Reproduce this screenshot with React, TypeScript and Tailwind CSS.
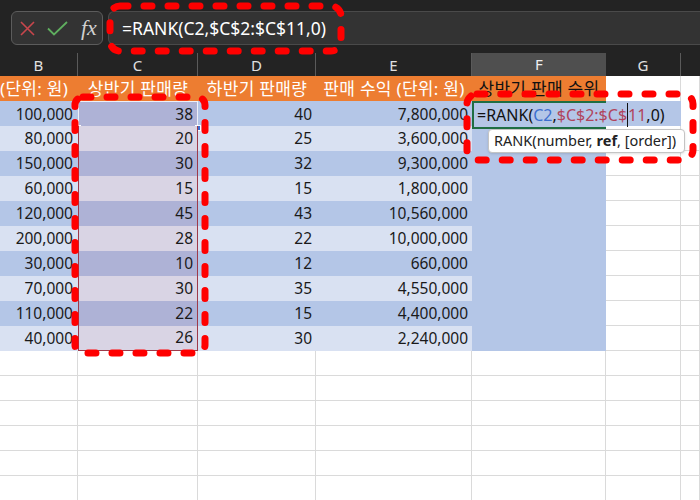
import React from 'react'

const cols = 'grid grid-cols-[78px_120px_118px_156px_134px_75px_1fr]'

const rows = [
  ['100,000', '38', '40', '7,800,000'],
  ['80,000', '20', '25', '3,600,000'],
  ['150,000', '30', '32', '9,300,000'],
  ['60,000', '15', '15', '1,800,000'],
  ['120,000', '45', '43', '10,560,000'],
  ['200,000', '28', '22', '10,000,000'],
  ['30,000', '10', '12', '660,000'],
  ['70,000', '30', '35', '4,550,000'],
  ['110,000', '22', '15', '4,400,000'],
  ['40,000', '26', '30', '2,240,000'],
]

const grid = 'border-r border-b border-[#dadada] bg-white'

function ColHead({ label, active }: { label: string; active?: boolean }) {
  return (
    <div
      className={
        active
          ? 'flex items-center justify-center bg-[#4f4f4f] border-b-2 border-[#2f7a4f] text-[15px] text-[#f0f0f0]'
          : 'flex items-center justify-center border-r border-[#5a5a5a] text-[15px] text-[#e0e0e0]'
      }
    >
      {label}
    </div>
  )
}

function DataRow({ cells, index }: { cells: string[]; index: number }) {
  const dark = index % 2 === 0
  const base = dark ? 'bg-[#b4c6e7]' : 'bg-[#d9e1f2]'
  const tint = dark ? 'bg-[#aeb2d6]' : 'bg-[#d9d4e4]'
  const first = index === 0
  const last = index === rows.length - 1

  let cBorder = 'border-x border-[#9e3a4a]'
  if (first) cBorder = 'border-x border-t border-[#eef0f8] border-b-2 border-b-[#3d6fd1]'
  if (last) cBorder = 'border-x border-b border-[#9e3a4a]'

  return (
    <div className={`${cols} h-[25px] text-[15.5px] text-[#1a1a1a]`}>
      <div className={`${base} flex items-center justify-end pr-[5px]`}>{cells[0]}</div>
      <div className={`${tint} ${cBorder} relative flex items-center justify-end pr-[4px]`}>
        {cells[1]}
        {first && (
          <>
            <span className="absolute -left-[4px] -bottom-[4px] w-[6px] h-[6px] bg-[#3d6fd1] border border-white" />
            <span className="absolute -right-[4px] -bottom-[4px] w-[6px] h-[6px] bg-[#3d6fd1] border border-white" />
          </>
        )}
      </div>
      <div className={`${base} flex items-center justify-end pr-[4px]`}>{cells[2]}</div>
      <div className={`${base} flex items-center justify-end pr-[4px]`}>{cells[3]}</div>
      {first ? (
        <div className="relative z-10 bg-[#b4c6e7] border-l-2 border-y-2 border-[#1f6e43] flex items-center pl-[3px] whitespace-nowrap text-[16px] text-[#111]">
          =RANK(<span className="text-[#3c6fcf]">C2</span>,
          <span className="text-[#b0445c]">$C$2:$C$</span>
          <span className="text-[#b0445c] border-l border-[#111]">11</span>,0)
        </div>
      ) : (
        <div className="bg-[#b4c6e7]" />
      )}
      <div className={first ? 'bg-[#b4c6e7]' : grid} />
      <div className={grid} />
    </div>
  )
}

export default function App() {
  return (
    <div className="relative w-[700px] h-[500px] overflow-hidden bg-white font-['Noto_Sans','Noto_Sans_CJK_KR',sans-serif]">
      {/* Formula bar */}
      <div className="h-[53px] bg-[#232323] pt-[11px] pl-[11px] flex gap-[5px]">
        <div className="w-[92px] h-[34px] rounded-[6px] border border-[#5c5c5c] bg-[#333333] flex items-center pl-[8px]">
          <svg width="15" height="15" viewBox="0 0 15 15" className="shrink-0">
            <path d="M1 1 L14 14 M14 1 L1 14" stroke="#c8464c" strokeWidth="1.6" fill="none" />
          </svg>
          <svg width="21" height="15" viewBox="0 0 21 15" className="ml-[12px] shrink-0">
            <path d="M1 7.5 L7 13.5 L20 1" stroke="#5fae5f" strokeWidth="1.8" fill="none" />
          </svg>
          <span className="ml-[13px] font-['Liberation_Serif',serif] italic text-[22px] leading-none text-[#d0d0d0]">fx</span>
        </div>
        <div className="flex-1 h-[34px] rounded-l-[6px] border border-r-0 border-[#4a4a4a] bg-[#333333] flex items-center pl-[13px] text-[17.5px] text-white whitespace-nowrap">
          =RANK(C2,$C$2:$C$11,0)
        </div>
      </div>

      {/* Column letters */}
      <div className={`${cols} h-[23px] bg-[#232323]`}>
        <ColHead label="B" />
        <ColHead label="C" />
        <ColHead label="D" />
        <ColHead label="E" />
        <ColHead label="F" active />
        <ColHead label="G" />
        <div />
      </div>

      {/* Header row */}
      <div className={`${cols} h-[25px] text-[17px] tracking-[0.3px] text-white whitespace-nowrap`}>
        <div className="bg-[#ed7d31] flex items-center">(단위: 원)</div>
        <div className="bg-[#ed7d31] flex items-center justify-center">상반기 판매량</div>
        <div className="bg-[#ed7d31] flex items-center justify-center">하반기 판매량</div>
        <div className="bg-[#ed7d31] flex items-center justify-center">판매 수익 (단위: 원)</div>
        <div className="bg-[#ed7d31] flex items-center justify-center text-[#111]">상반기 판매 순위</div>
        <div className={grid} />
        <div className={grid} />
      </div>

      {rows.map((r, i) => (
        <DataRow key={i} cells={r} index={i} />
      ))}

      {/* Empty rows */}
      {Array.from({ length: 6 }).map((_, i) => (
        <div key={i} className={`${cols} h-[25px]`}>
          {Array.from({ length: 7 }).map((__, j) => (
            <div key={j} className={grid} />
          ))}
        </div>
      ))}

      {/* Function tooltip */}
      <div className="absolute left-[488px] top-[129px] w-[197px] h-[24px] rounded-[4px] border border-[#c4c4c4] bg-white shadow-sm flex items-center pl-[5px] text-[14.5px] text-[#222] whitespace-nowrap">
        RANK(number,&nbsp;<span className="font-bold">ref</span>, [order])
      </div>

      {/* Red dashed annotations */}
      <svg className="absolute inset-0 pointer-events-none" width="700" height="500" viewBox="0 0 700 500">
        <g fill="none" stroke="#ff0000" strokeWidth="7" strokeLinecap="round" strokeDasharray="8 16">
          <rect x="110" y="6" width="231" height="45" rx="10" />
          <rect x="75" y="97" width="130" height="256" rx="8" />
          <rect x="467" y="94" width="226" height="66" rx="10" />
        </g>
      </svg>
    </div>
  )
}
